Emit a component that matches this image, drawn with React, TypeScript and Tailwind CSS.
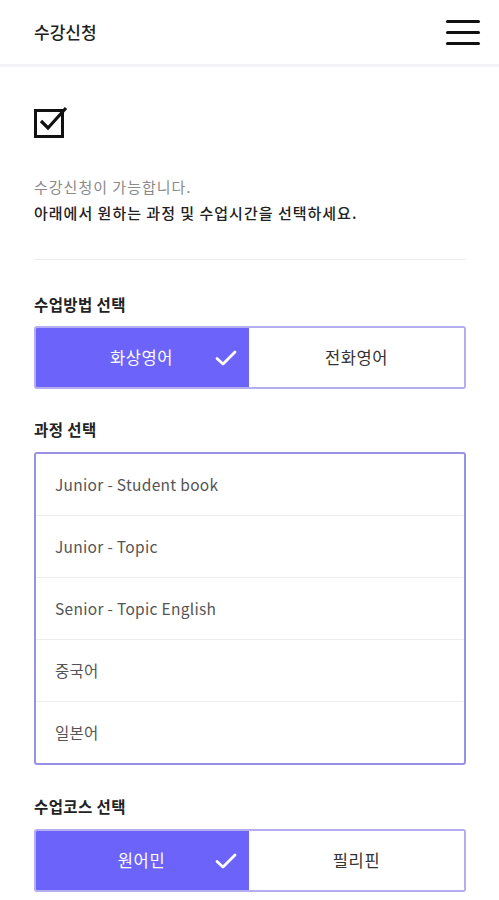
import React from "react";

const font = { fontFamily: '"Noto Sans CJK KR", "Noto Sans", sans-serif' };

function Check({ className = "" }: { className?: string }) {
  return (
    <svg className={className} width="22" height="18" viewBox="0 0 22 18" fill="none">
      <path d="M2 9.5 L8 15 L20 3" stroke="white" strokeWidth="2.8" strokeLinecap="round" strokeLinejoin="round" />
    </svg>
  );
}

function Toggle({ left, right }: { left: string; right: string }) {
  return (
    <div className="flex h-[63px] rounded-[3px] border-2 border-[#b4aef0] overflow-hidden">
      <div className="relative flex-1 bg-[#6b63fa] flex items-center justify-center -m-[2px] mr-0 rounded-l-[3px]">
        <span className="text-white text-[16.5px] tracking-[0.6px]">{left}</span>
        <Check className="absolute right-[12px] top-1/2 -translate-y-1/2" />
      </div>
      <div className="flex-1 flex items-center justify-center bg-white">
        <span className="text-[#333] text-[16.5px] tracking-[0.6px]">{right}</span>
      </div>
    </div>
  );
}

export default function App() {
  const items = ["Junior - Student book", "Junior - Topic", "Senior - Topic English", "중국어", "일본어"];
  return (
    <div className="w-[499px] min-h-[900px] bg-white text-[#222]" style={font}>
      <header className="h-[67px] flex items-center justify-between pl-[34px] pr-[19px] border-b-[3px] border-[#f4f4f6]">
        <h1 className="text-[17px] font-medium text-[#222]">수강신청</h1>
        <div className="flex flex-col gap-[8px] w-[34px]">
          <span className="block h-[3px] bg-[#111] rounded-sm" />
          <span className="block h-[3px] bg-[#111] rounded-sm" />
          <span className="block h-[3px] bg-[#111] rounded-sm" />
        </div>
      </header>
      <main className="pl-[34px] pr-[33px]">
        <div className="pt-[39px]">
          <svg width="34" height="32" viewBox="0 0 34 32" fill="none">
            <rect x="1.5" y="4.5" width="27" height="26" stroke="#111" strokeWidth="3" />
            <path d="M7 15 L14 22 L32 2" stroke="#111" strokeWidth="3.2" strokeLinejoin="miter" />
          </svg>
        </div>
        <div className="mt-[36px] text-[15px] leading-[26px] tracking-[1px]">
          <p className="text-[#8a8a8a]">수강신청이 가능합니다.</p>
          <p className="text-[#222] font-medium">아래에서 원하는 과정 및 수업시간을 선택하세요.</p>
        </div>
        <div className="mt-[33px] h-px bg-[#ececec]" />
        <h2 className="mt-[34px] h-[20px] leading-[20px] text-[15.5px] tracking-[0.4px] font-bold mb-[12px]">수업방법 선택</h2>
        <Toggle left="화상영어" right="전화영어" />
        <h2 className="mt-[30px] h-[20px] leading-[20px] text-[15.5px] tracking-[0.4px] font-bold mb-[13px]">과정 선택</h2>
        <div className="rounded-[3px] border-2 border-[#9991e4] h-[313px] flex flex-col">
          {items.map((t, i) => (
            <div
              key={t}
              className={`flex-1 flex items-center px-[19px] text-[15.5px] tracking-[0.3px] text-[#555] ${i > 0 ? "border-t border-[#eeeeee]" : ""}`}
            >
              {t}
            </div>
          ))}
        </div>
        <h2 className="mt-[31px] h-[20px] leading-[20px] text-[15.5px] tracking-[0.4px] font-bold mb-[13px]">수업코스 선택</h2>
        <Toggle left="원어민" right="필리핀" />
      </main>
    </div>
  );
}
